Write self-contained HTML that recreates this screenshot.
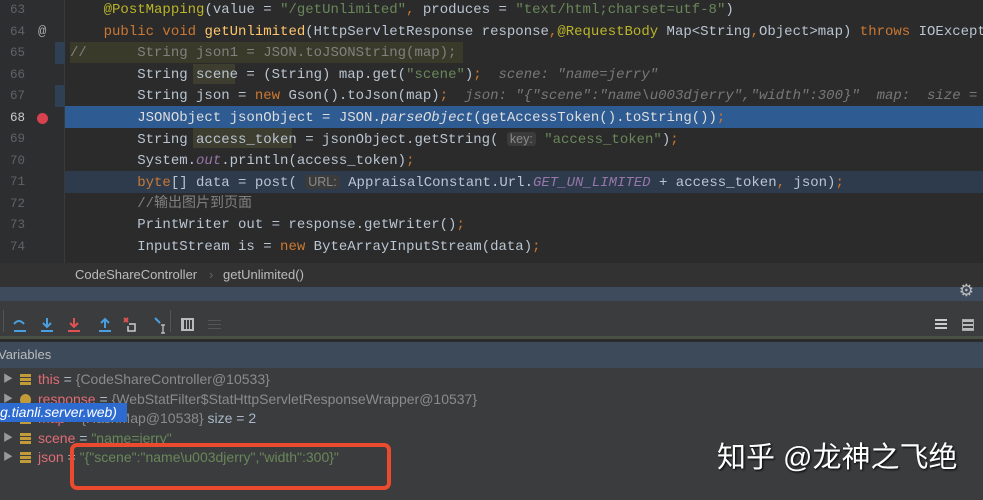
<!DOCTYPE html>
<html><head><meta charset="utf-8"><style>
*{margin:0;padding:0;box-sizing:border-box}
body{width:983px;height:500px;overflow:hidden;background:#2b2b2b;position:relative;font-family:"Liberation Sans","Noto Sans CJK SC",sans-serif}
.code{position:absolute;left:0;top:0;width:983px;height:263px;background:#2b2b2b;overflow:hidden}
.gut{position:absolute;left:0;top:0;width:65px;height:263px;background:#2d2e30;border-right:1px solid #3a3a3a}
.ln{position:absolute;left:0;width:983px;height:21.5px;font:14px/21.5px "Liberation Mono","Noto Sans CJK SC",monospace;color:#b9c5d2;white-space:pre}
.ln .n{position:absolute;left:10px;width:20px;color:#606366;font-size:12.5px}
.ln .t{position:absolute;left:70px}
.k{color:#cc7832}.s{color:#6a8759}.a{color:#bbb529}.f{color:#ffc66d}.i{font-style:italic}.p{color:#9876aa}.c{color:#808080}.h{color:#787878;font-style:italic}
.hint{font-family:"Liberation Sans",sans-serif;color:#8a8a8a;background:#3b3b3b;padding:0 3px;border-radius:3px;font-size:12.5px}
.bc{position:absolute;left:0;top:263px;width:983px;height:24px;background:#323232;color:#bbb;font-size:13px;line-height:24px}
.tb1{position:absolute;left:0;top:287px;width:983px;height:14px;background:#3d4b5c}
.tb2{position:absolute;left:0;top:301px;width:983px;height:38px;background:#3a3c3e;border-bottom:3px solid #4b5046}
.vh{position:absolute;left:0;top:342px;width:983px;height:26px;background:#3d4a5a;color:#bbb;font-size:13px;line-height:26px}
.tree{position:absolute;left:0;top:368px;width:983px;height:132px;background:#3a3c3e}
.r{position:absolute;left:0;height:19px;line-height:19px;font-size:14px;color:#a9b7c6;white-space:nowrap}
.r .ar{position:absolute;left:3px;color:#999;font-size:10px}
.r .ic{position:absolute;left:20px;top:4px;width:11px;height:12px;background:repeating-linear-gradient(#c19a3a 0 3px,transparent 3px 4px)}
.r .tx{position:absolute;left:38px}
.nm{color:#e06c75}.g{color:#8b8b8b}.v{color:#6a8759}
</style></head><body>
<div class="code">
<div class="gut"></div>
<div style="position:absolute;left:55px;top:42px;width:10px;height:22px;background:#2f4054"></div>
<div style="position:absolute;left:55px;top:85px;width:10px;height:22px;background:#2f4054"></div>
<div style="position:absolute;left:70px;top:42px;width:393px;height:21px;background:#3a3a2a"></div>
<div style="position:absolute;left:65px;top:106px;width:918px;height:21.5px;background:#2f5b93"></div>
<div style="position:absolute;left:65px;top:171px;width:918px;height:21.5px;background:#2e3b4c"></div>
<div style="position:absolute;left:193px;top:64px;width:42px;height:20px;background:#3d3d30"></div>
<div style="position:absolute;left:193px;top:128px;width:99px;height:20px;background:#3d3d30"></div>
<div class="ln" style="top:0px"><span class="n">63</span><span class="t">    <span class="a">@PostMapping</span>(value = <span class="s">"/getUnlimited"</span><span class="k">,</span> produces = <span class="s">"text/html;charset=utf-8"</span>)</span></div>
<div class="ln" style="top:21.5px"><span class="n">64</span><span style="position:absolute;left:38px;color:#aaa">@</span><span class="t">    <span class="k">public void</span> <span class="f">getUnlimited</span>(HttpServletResponse response<span class="k">,</span><span class="a">@RequestBody</span> Map&lt;String<span class="k">,</span>Object&gt;map) <span class="k">throws</span> IOException</span></div>
<div class="ln" style="top:43px"><span class="n">65</span><span class="t c">//      String json1 = JSON.toJSONString(map);</span></div>
<div class="ln" style="top:64.5px"><span class="n">66</span><span class="t">        String scene = (String) map.get(<span class="s">"scene"</span>)<span class="k">;</span>  <span class="h">scene: "name=jerry"</span></span></div>
<div class="ln" style="top:86px"><span class="n">67</span><span class="t">        String json = <span class="k">new</span> Gson().toJson(map)<span class="k">;</span>  <span class="h">json: "{"scene":"name\u003djerry","width":300}"  map:  size = 2</span></span></div>
<div class="ln" style="top:107.5px"><span class="n" style="color:#ccc">68</span><span style="position:absolute;left:37px;top:5px;width:11px;height:11px;border-radius:50%;background:#d8414d"></span><span class="t" style="color:#ddd">        JSONObject jsonObject = JSON.<span class="i">parseObject</span>(getAccessToken().toString())<span class="k">;</span></span></div>
<div class="ln" style="top:129px"><span class="n">69</span><span class="t">        String access_token = jsonObject.getString( <span class="hint">key:</span> <span class="s">"access_token"</span>)<span class="k">;</span></span></div>
<div class="ln" style="top:150.5px"><span class="n">70</span><span class="t">        System.<span class="p i">out</span>.println(access_token)<span class="k">;</span></span></div>
<div class="ln" style="top:172px"><span class="n">71</span><span class="t">        <span class="k">byte</span>[] data = post( <span class="hint">URL:</span> AppraisalConstant.Url.<span class="p i">GET_UN_LIMITED</span> + access_token<span class="k">,</span> json)<span class="k">;</span></span></div>
<div class="ln" style="top:193.5px"><span class="n">72</span><span class="t c">        //输出图片到页面</span></div>
<div class="ln" style="top:215px"><span class="n">73</span><span class="t">        PrintWriter out = response.getWriter()<span class="k">;</span></span></div>
<div class="ln" style="top:236.5px"><span class="n">74</span><span class="t">        InputStream is = <span class="k">new</span> ByteArrayInputStream(data)<span class="k">;</span></span></div>
</div>
<div class="bc"><span style="position:absolute;left:75px">CodeShareController</span><span style="position:absolute;left:209px;color:#666">›</span><span style="position:absolute;left:223px">getUnlimited()</span></div>
<div class="tb1"><span style="position:absolute;right:9px;top:-6px;color:#bbb;font-size:17px">⚙</span></div>
<div class="tb2"></div>
<div style="position:absolute;left:3px;top:310px;width:1px;height:22px;background:#555"></div>
<svg style="position:absolute;left:12px;top:316px" width="160" height="18">
<g stroke="#4a9fe0" stroke-width="2" fill="none">
<path d="M2 8 Q7 2 12 8"/><path d="M2 15h12"/>
<path d="M35 2v9M31 7l4 4 4-4"/><path d="M29 15h12"/>
<path d="M93 12V3M89 7l4-4 4 4"/><path d="M87 15h12"/>
<path d="M143 2l5 5"/></g>
<g stroke="#e05252" stroke-width="2" fill="none"><path d="M62 2v9M58 7l4 4 4-4"/><path d="M56 15h12"/><path d="M112 2l4 4M116 2l-4 4"/></g>
<path d="M117 8h6v7h-7v-5" stroke="#ccc" stroke-width="1.5" fill="none"/>
<path d="M151 9v8M149 9h4M149 17h4" stroke="#ccc" stroke-width="1.2" fill="none"/>
</svg>
<div style="position:absolute;left:170px;top:310px;width:1px;height:22px;background:#555"></div>
<div style="position:absolute;left:181px;top:318px;width:13px;height:13px;border:2px solid #bbb;background:repeating-linear-gradient(90deg,#bbb 0 1px,transparent 1px 3px)"></div>
<div style="position:absolute;left:208px;top:320px;width:13px;height:10px;background:repeating-linear-gradient(#555 0 1px,transparent 1px 4px)"></div>
<div style="position:absolute;left:935px;top:319px;width:12px;height:11px;background:repeating-linear-gradient(#ccc 0 2px,transparent 2px 4px)"></div>
<div style="position:absolute;left:962px;top:319px;width:12px;height:12px;border:1px solid #aaa;background:repeating-linear-gradient(#bbb 0 2px,transparent 2px 4px)"></div>
<div class="vh"><span style="position:absolute;left:-2px">Variables</span></div>
<div class="tree">
<div class="r" style="top:2px"><span class="ar">▶</span><span class="ic"></span><span class="tx"><span class="nm">this</span> = <span class="g">{CodeShareController@10533}</span></span></div>
<div class="r" style="top:21.5px"><span class="ar">▶</span><span class="ic" style="border-radius:50%;background:#c19a3a"></span><span class="tx"><span class="nm">response</span> = <span class="g">{WebStatFilter$StatHttpServletResponseWrapper@10537}</span></span></div>
<div class="r" style="top:41px"><span class="ar">▶</span><span class="ic"></span><span class="tx"><span class="nm">map</span> = <span class="g">{HashMap@10538}</span>  size = 2</span></div>
<div class="r" style="top:60.5px"><span class="ar">▶</span><span class="ic"></span><span class="tx"><span class="nm">scene</span> = <span class="v">"name=jerry"</span></span></div>
<div class="r" style="top:80px"><span class="ar">▶</span><span class="ic"></span><span class="tx"><span class="nm">json</span> = <span class="v">"{"scene":"name\u003djerry","width":300}"</span></span></div>
</div>
<div style="position:absolute;left:0;top:403px;width:127px;height:19px;background:#2d6bd1;color:#fff;font-style:italic;font-size:14px;line-height:19px;white-space:nowrap;overflow:hidden">g.tianli.server.web)</div>
<div style="position:absolute;left:70px;top:443px;width:321px;height:47px;border:4px solid #eb4a2e;border-radius:7px"></div>
<div style="position:absolute;left:717px;top:440px;color:#fff;font-size:29px;line-height:36px;text-shadow:1px 1px 2px #000;white-space:nowrap;font-family:'Liberation Sans','Noto Sans CJK SC',sans-serif">知乎 @龙神之飞绝</div>
</body></html>
